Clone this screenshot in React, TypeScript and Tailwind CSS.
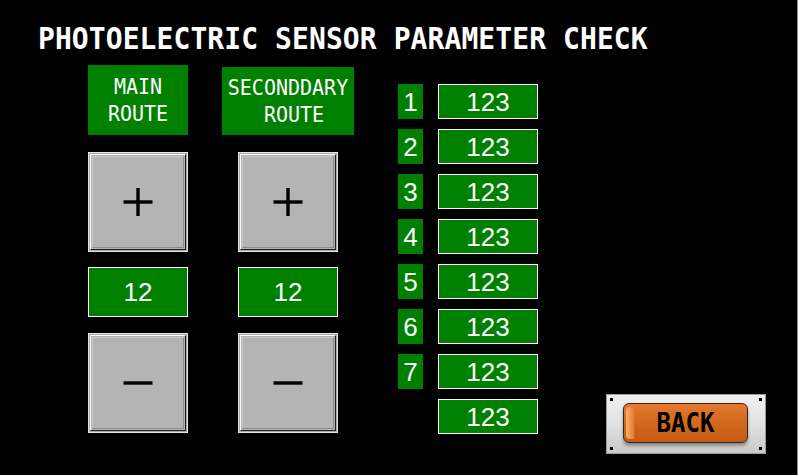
import React from "react";

const MONO = "font-['DejaVu_Sans_Mono','Liberation_Mono',monospace]";
const SANS = "font-['Liberation_Sans',Arial,sans-serif]";

function RouteLabel({ lines, className }: { lines: string[]; className: string }) {
  return (
    <div
      className={`flex flex-col items-center justify-center bg-[#008000] text-white text-[20px] leading-[27px] ${MONO} ${className}`}
    >
      {lines.map(l => (
        <span key={l} className="whitespace-pre scale-y-110">{l}</span>
      ))}
    </div>
  );
}

function StepButton({ kind }: { kind: "plus" | "minus" }) {
  return (
    <div className="w-[100px] h-[100px] border border-[#e4e4e4] bg-[#a9a9a9] p-px">
      <div className="w-full h-full border border-t-white border-l-white border-b-[#1e1e1e] border-r-[#1e1e1e] bg-[#b4b4b4] p-px">
        <div className="w-full h-full border border-t-[#c8c8c8] border-l-[#c8c8c8] border-b-[#8a8a8a] border-r-[#8a8a8a] flex items-center justify-center">
          <svg width="30" height="30" viewBox="0 0 30 30">
            <line x1="0.5" y1="15" x2="29.5" y2="15" stroke="#000" strokeWidth="3.4" />
            {kind === "plus" && (
              <line x1="15" y1="1" x2="15" y2="29" stroke="#000" strokeWidth="3.4" />
            )}
          </svg>
        </div>
      </div>
    </div>
  );
}

function ValueBox({ value, className }: { value: string; className: string }) {
  return (
    <div
      className={`flex items-center justify-center bg-[#008000] border border-white text-white text-[26px] leading-none ${SANS} ${className}`}
    >
      {value}
    </div>
  );
}

function Corner({ pos }: { pos: string }) {
  return <span className={`absolute w-[3px] h-[3px] bg-black ${pos}`} />;
}

function BackButton() {
  return (
    <div className="relative w-[160px] h-[60px] border border-[#9c9c9c] bg-gradient-to-b from-[#f0f0f0] via-[#e2e2e2] to-[#c9c9c9] pl-[16px] pr-[17px] pt-[8px] pb-[10px]">
      <Corner pos="top-[3px] left-[3px]" />
      <Corner pos="top-[3px] right-[3px]" />
      <Corner pos="bottom-[3px] left-[3px]" />
      <Corner pos="bottom-[3px] right-[3px]" />
      <div className="w-full h-full rounded-[6px] border border-[#3a2413] bg-gradient-to-b from-[#e4782e] via-[#d2691e] to-[#c45a16] shadow-[0_3px_3px_rgba(90,90,90,0.55)] flex items-center justify-center relative overflow-hidden">
        <span className="absolute left-[2px] top-[3px] bottom-[3px] w-[8px] rounded-l-[4px] bg-gradient-to-r from-[#f6b070] to-[#e47a30]" />
        <span className={`relative text-black font-bold text-[24px] leading-none scale-y-110 ${MONO}`}>BACK</span>
      </div>
    </div>
  );
}

export default function App() {
  const rows = ["1", "2", "3", "4", "5", "6", "7", ""];
  return (
    <div className="w-[798px] h-[475px] bg-black border-r border-[#8a8a8a] flex flex-col overflow-hidden">
      {/* Title */}
      <div className="h-[65px] pl-[38px] pt-[23px] shrink-0">
        <h1 className={`text-white font-bold text-[28px] leading-[32px] tracking-[0.08px] origin-left scale-y-110 ${MONO}`}>
          PHOTOELECTRIC SENSOR PARAMETER CHECK
        </h1>
      </div>

      <div className="flex-1 flex pl-[88px]">
        {/* Main route column */}
        <div className="w-[100px] flex flex-col">
          <RouteLabel lines={["MAIN", "ROUTE"]} className="w-[100px] h-[70px]" />
          <div className="mt-[17px]">
            <StepButton kind="plus" />
          </div>
          <ValueBox value="12" className="mt-[15px] w-[100px] h-[50px]" />
          <div className="mt-[16px]">
            <StepButton kind="minus" />
          </div>
        </div>

        {/* Secondary route column */}
        <div className="ml-[34px] w-[132px] flex flex-col items-center">
          <RouteLabel lines={["SECONDDARY", "\u00a0ROUTE"]} className="mt-[2px] w-[132px] h-[68px]" />
          <div className="mt-[17px]">
            <StepButton kind="plus" />
          </div>
          <ValueBox value="12" className="mt-[15px] w-[100px] h-[50px]" />
          <div className="mt-[16px]">
            <StepButton kind="minus" />
          </div>
        </div>

        {/* Sensor list */}
        <div className="ml-[44px] mt-[19px] flex flex-col gap-[10px]">
          {rows.map((n, i) => (
            <div key={i} className="flex items-center">
              {n ? (
                <div className={`w-[25px] h-[35px] bg-[#008000] text-white text-[26px] leading-none flex items-center justify-center ${SANS}`}>
                  {n}
                </div>
              ) : (
                <div className="w-[25px] h-[35px]" />
              )}
              <ValueBox value="123" className="ml-[15px] w-[100px] h-[35px]" />
            </div>
          ))}
        </div>

        {/* Back */}
        <div className="ml-[68px] flex flex-col justify-end pb-[21px]">
          <BackButton />
        </div>
      </div>
    </div>
  );
}
